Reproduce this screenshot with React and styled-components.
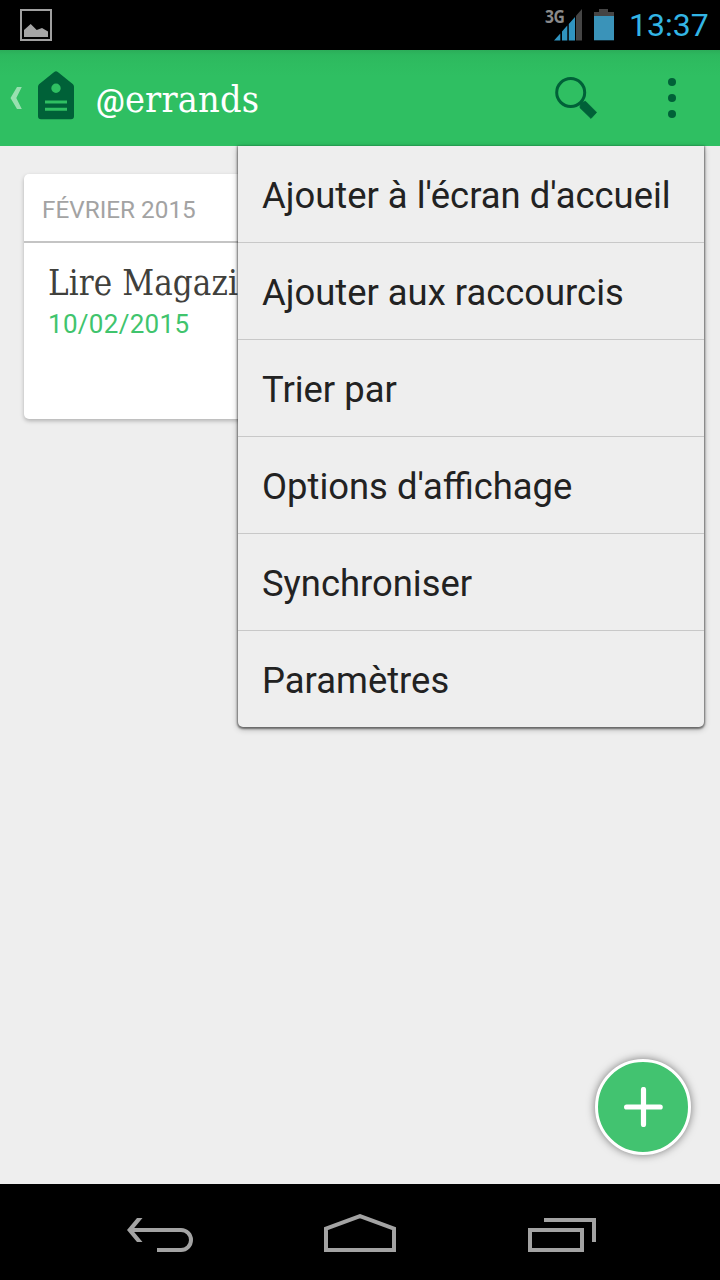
import React from 'react';
import styled, { createGlobalStyle } from 'styled-components';

const GlobalStyle = createGlobalStyle`
  * { box-sizing: border-box; }
  body { margin: 0; background: #eee; }
`;

const Screen = styled.div`
  position: relative;
  display: flex;
  flex-direction: column;
  width: 720px;
  height: 1280px;
  overflow: hidden;
  background: #eee;
  font-family: Roboto, "Liberation Sans", sans-serif;
`;

const Icon = styled.svg`
  display: block;
  flex: none;
`;

const StatusBar = styled.header`
  display: flex;
  align-items: center;
  justify-content: space-between;
  flex: none;
  height: 50px;
  padding: 0 12px 0 20px;
  background: #000;
`;

const StatusIcons = styled.div`
  display: flex;
  align-items: center;
`;

const NetworkType = styled.span`
  align-self: flex-start;
  width: 9px;
  margin-top: 9px;
  font: 700 18.5px/16px "Open Sans", "Noto Sans", sans-serif;
  letter-spacing: -0.6px;
  white-space: nowrap;
  color: #8a8a8a;
  transform: scaleX(0.85);
  transform-origin: left;
`;

const Clock = styled.time`
  width: 79px;
  margin-left: 15px;
  font-size: 32px;
  line-height: 52px;
  white-space: nowrap;
  color: #33b5e5;
`;

const ActionBar = styled.nav`
  display: flex;
  align-items: center;
  flex: none;
  height: 96px;
  padding: 0 44px 0 10px;
  background: linear-gradient(#2bad59 0, #2db85e 5px, #2ebc60 14px, #2fbf62 26px);
`;

const Title = styled.h1`
  flex: 1;
  display: flex;
  align-items: baseline;
  margin: 4px 0 0 22px;
  font: 400 37.5px/48px "DejaVu Serif Condensed", "DejaVu Serif", serif;
  letter-spacing: 0.2px;
  color: #fff;
`;

const AtSign = styled.span`
  font: 500 32px/48px Roboto, sans-serif;
`;

const Content = styled.main`
  flex: 1;
  padding: 28px 24px;
`;

const Card = styled.section`
  height: 245px;
  border-radius: 5px;
  background: #fff;
  box-shadow: 0 2px 4px rgba(0, 0, 0, 0.26);
`;

const CardHeading = styled.h2`
  height: 69px;
  margin: 0;
  padding: 2px 18px 0;
  border-bottom: 2px solid #c4c4c4;
  font-size: 24.3px;
  font-weight: 400;
  line-height: 68px;
  color: #a3a3a3;
`;

const Note = styled.article`
  display: flex;
  flex-direction: column;
  padding: 17px 24px;
`;

const NoteTitle = styled.h3`
  margin: 0;
  font: 400 34.6px/46px "DejaVu Serif Condensed", "DejaVu Serif", serif;
  letter-spacing: 0.1px;
  color: #40403c;
`;

const NoteDate = styled.time`
  font-size: 26px;
  line-height: 36px;
  letter-spacing: 0.3px;
  color: #40c46d;
`;

const Menu = styled.ul`
  position: absolute;
  top: 146px;
  right: 16px;
  width: 466px;
  margin: 0;
  padding: 0;
  list-style: none;
  border-radius: 0 0 5px 5px;
  background: #eee;
  box-shadow: 0 1px 2px 1px rgba(0, 0, 0, 0.45), 0 2px 6px rgba(0, 0, 0, 0.3);
`;

const MenuItem = styled.li`
  height: 96px;
  padding: 1px 24px 0;
  font-size: 36.4px;
  line-height: 97px;
  white-space: nowrap;
  color: #222;
  & + & {
    height: 97px;
    border-top: 1px solid #c8c8c8;
  }
`;

const AddButton = styled.button`
  position: absolute;
  right: 29px;
  bottom: 125px;
  display: grid;
  place-items: center;
  width: 96px;
  height: 96px;
  padding: 0;
  border: 3px solid #fff;
  border-radius: 50%;
  background: #42c370;
  box-shadow: 0 0 8px rgba(0, 0, 0, 0.5);
`;

const NavigationBar = styled.footer`
  display: flex;
  align-items: center;
  flex: none;
  gap: 131px;
  height: 96px;
  padding: 2px 0 0 127px;
  background: #000;
`;

const menuItems = [
  "Ajouter à l'écran d'accueil",
  'Ajouter aux raccourcis',
  'Trier par',
  "Options d'affichage",
  'Synchroniser',
  'Paramètres',
];

export default function App() {
  return (
    <Screen>
      <GlobalStyle />
      <StatusBar>
        <Icon width="32" height="32" viewBox="20 9 32 32">
          <rect x="21" y="10" width="30" height="30" fill="none" stroke="#a0a0a0" strokeWidth="2" />
          <path d="M24 37V30L30.7 24L36.7 30L42 28L48 31.5V37Z" fill="#a5a5a5" />
        </Icon>
        <StatusIcons>
          <NetworkType>3G</NetworkType>
          <Icon width="28" height="32" viewBox="554 9 28 32">
            <path d="M554 40.5L560.3 33.4V40.5ZM562 40.5V31.5L567.3 25.5V40.5ZM568.8 40.5V23.9L575 17V40.5Z" fill="#3094c0" />
            <path d="M576 40.5V15.8L582 9V40.5Z" fill="#454545" />
          </Icon>
          <Icon width="32" height="32" viewBox="582 9 32 32">
            <path d="M594 16V12H599V9H608V12H614V16Z" fill="#454545" />
            <path d="M594 16H614V40.3H594Z" fill="#3a93b9" />
          </Icon>
          <Clock>13:37</Clock>
        </StatusIcons>
      </StatusBar>
      <ActionBar>
        <Icon width="12" height="48" viewBox="10 74 12 48">
          <path d="M17 87H21.8L16.3 98L21.8 109H17L10.5 98Z" fill="#98e0b0" />
        </Icon>
        <Icon width="52" height="54" viewBox="22 73.2 52 54">
          <path fillRule="evenodd" fill="#006138" d="M54.2 74.2Q56 72.6 57.8 74.2L73 86.5Q74 87.5 74 89V118.5Q74 121.5 71 121.5H41Q38 121.5 38 118.5V89Q38 87.5 39 86.5ZM60.7 90.5A4.7 4.7 0 1 0 51.3 90.5A4.7 4.7 0 1 0 60.7 90.5ZM45 102.8V105.7H67V102.8ZM45 110V112.9H67V110Z" />
        </Icon>
        <Title><AtSign>@</AtSign>errands</Title>
        <Icon width="42" height="42" viewBox="555 77 42 42">
          <circle cx="570.7" cy="92.5" r="14" fill="none" stroke="#006138" strokeWidth="3" />
          <path d="M580.3 103L585.5 101.3L596.6 112.4L591 118.4L580 107.8Z" fill="#006138" stroke="#006138" strokeWidth="0.8" strokeLinejoin="round" />
        </Icon>
        <Icon width="79" height="42" viewBox="597 77 79 42">
          {[82, 98, 114].map((y) => <circle key={y} cx="672" cy={y} r="4" fill="#006138" />)}
        </Icon>
      </ActionBar>
      <Content>
        <Card>
          <CardHeading>FÉVRIER 2015</CardHeading>
          <Note>
            <NoteTitle>Lire Magazi</NoteTitle>
            <NoteDate>10/02/2015</NoteDate>
          </Note>
        </Card>
      </Content>
      <NavigationBar>
        <Icon width="66" height="38" viewBox="127 1214 66 38" fill="#a3a3a3">
          <path d="M131 1230H181A10 10 0 0 1 181 1250H157" fill="none" stroke="#a3a3a3" strokeWidth="4" />
          <path d="M127 1230L137 1218H142.5L132.5 1230L142.5 1242H137Z" />
        </Icon>
        <Icon width="72" height="38" viewBox="324 1214 72 38">
          <path d="M326 1250V1228.6L360 1216.1L394 1228.6V1250Z" fill="none" stroke="#a3a3a3" strokeWidth="4" />
        </Icon>
        <Icon width="68" height="38" viewBox="527 1214 68 38" overflow="visible">
          <path d="M530 1230H582V1250H530ZM544 1220H594V1242" fill="none" stroke="#a3a3a3" strokeWidth="4" />
        </Icon>
      </NavigationBar>
      <Menu>
        {menuItems.map((label) => <MenuItem key={label}>{label}</MenuItem>)}
      </Menu>
      <AddButton aria-label="Ajouter">
        <Icon width="40" height="40" viewBox="0 0 40 40">
          <path d="M20.5 2.5V37.5M3.6 20H37.2" stroke="#fff" strokeWidth="5.2" strokeLinecap="round" />
        </Icon>
      </AddButton>
    </Screen>
  );
}
